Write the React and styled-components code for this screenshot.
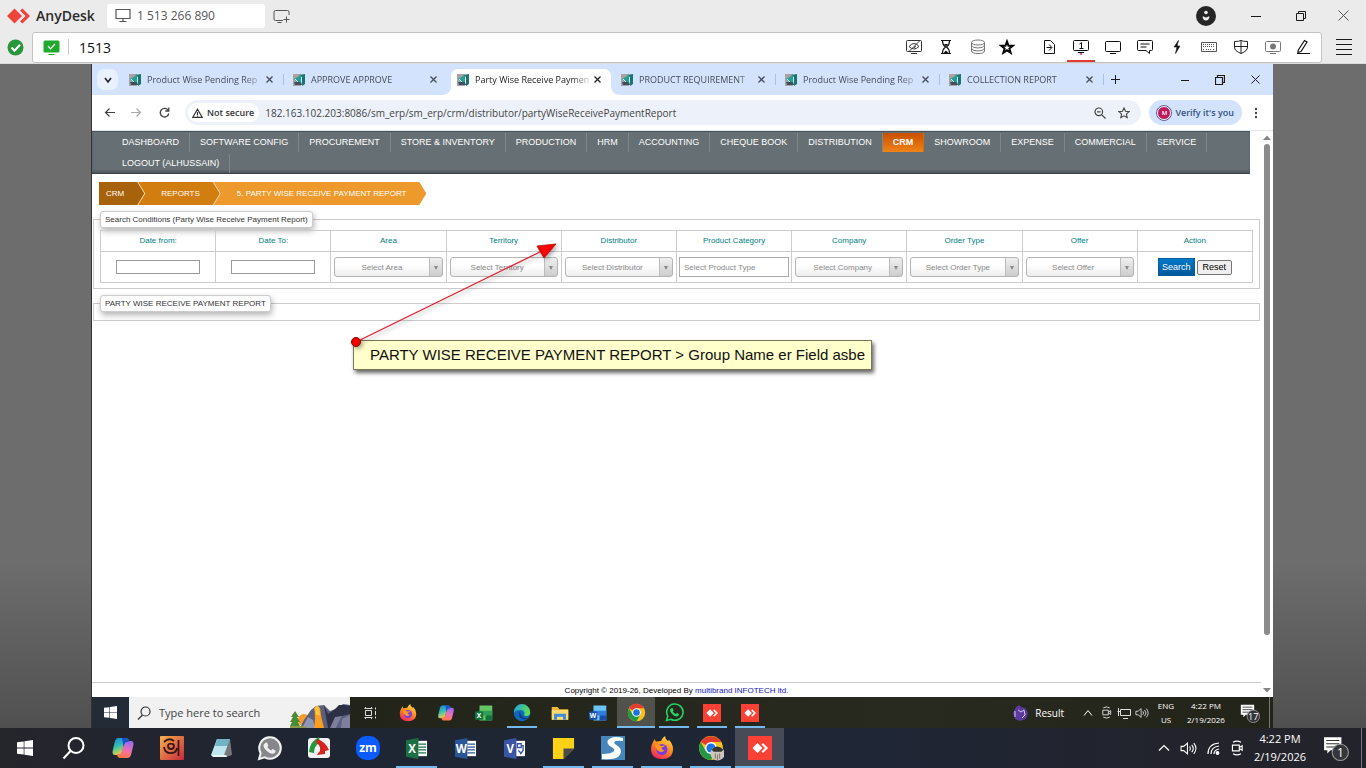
import React from 'react';
import styled, { createGlobalStyle, css } from 'styled-components';

const ui = '"Open Sans", "Noto Sans", sans-serif';
const arial = '"Liberation Sans", Arial, sans-serif';

const GlobalStyle = createGlobalStyle`
  *, *::before, *::after { box-sizing: border-box; }
  body { margin: 0; font-family: ${ui}; font-size: 12px; color: #222; }
  button, input, select { font: inherit; color: inherit; margin: 0; }
  button { padding: 0; border: 0; background: none; }
  ul, ol { list-style: none; margin: 0; padding: 0; }
  a { color: inherit; text-decoration: none; }
  svg { display: block; flex: none; }
`;

const Screen = styled.div`
  display: flex;
  flex-direction: column;
  min-height: 100vh;
  background: #ebebeb;
`;

/* ---------- remote-control client ---------- */
const TitleBar = styled.header`
  display: flex;
  align-items: center;
  height: 31px;
  padding-left: 6px;
`;
const Brand = styled.strong`
  margin-left: 5px;
  flex: 0 0 71px;
  font-size: 14px;
  font-weight: 600;
  color: #2b2b2b;
`;
const SessionTab = styled.button`
  display: flex;
  align-items: center;
  gap: 6px;
  width: 158px;
  height: 24px;
  padding-left: 8px;
  border-radius: 3px;
  background: #fff;
  font-size: 12px;
  color: #555;
`;
const IconButton = styled.button`
  display: flex;
  align-items: center;
  justify-content: center;
  width: ${(p) => p.$w || 32}px;
  height: ${(p) => p.$h || 30}px;
  color: ${(p) => p.$color || '#1a1a1a'};
  ${(p) => p.$active && css`
    background: linear-gradient(#e53935, #e53935) center bottom / 28px 2px no-repeat;
  `}
`;
const Spacer = styled.div`
  flex: 1;
`;
const AddressRow = styled.div`
  display: flex;
  align-items: center;
  height: 33px;
  padding-left: 7px;
  border-bottom: 1px solid #dcdcdc;
`;
const AddressBox = styled.div`
  display: flex;
  flex: 1;
  align-items: center;
  height: 31px;
  margin-left: 8px;
  padding: 0 4px 0 10px;
  border: 1px solid #c4c4c4;
  border-radius: 3px;
  background: #fff;
`;
const AddressInput = styled.input`
  flex: 1;
  min-width: 0;
  margin-left: 8px;
  padding: 0 0 0 10px;
  border: 0;
  border-left: 1px solid #ccc;
  height: 16px;
  font-size: 14px;
  color: #111;
  outline: 0;
`;
const ToolGroup = styled.div`
  display: flex;
  margin-left: ${(p) => p.$gap || 0}px;
`;

/* ---------- remote desktop ---------- */
const Desk = styled.main`
  display: flex;
  flex: 1;
  padding: 0 93px 0 91px;
  background: linear-gradient(#6d6d6d 0%, #6d6d6d 75%, #505050 100%);
`;
const Remote = styled.section`
  display: flex;
  flex: 1;
  flex-direction: column;
  min-width: 0;
  border-left: 1px solid #333;
  background: #fff;
`;

/* ---------- browser ---------- */
const TabStrip = styled.div`
  display: flex;
  align-items: center;
  height: 31px;
  padding-left: 5px;
  background: #d3e3fd;
`;
const TabSearch = styled.button`
  display: flex;
  align-items: center;
  justify-content: center;
  width: 21px;
  height: 21px;
  margin-right: 2px;
  border-radius: 7px;
  background: #e9f0fe;
`;
const Tab = styled.div`
  position: relative;
  display: flex;
  flex: 0 1 164px;
  align-items: center;
  align-self: stretch;
  min-width: 0;
  padding: 0 7px 0 9px;
  color: #444c58;
  ${(p) => p.$divided && css`
    &::after {
      content: '';
      position: absolute;
      right: 0;
      top: 10px;
      width: 1px;
      height: 11px;
      background: #a9bfe4;
    }
  `}
  ${(p) => p.$active && css`
    color: #222;
    &::before {
      content: '';
      position: absolute;
      inset: 5px 1px 0 3px;
      border-radius: 7px 7px 0 0;
      background: #fff;
    }
    &::after {
      content: '';
      position: absolute;
      right: -6px;
      bottom: 0;
      left: -4px;
      height: 7px;
      background:
        radial-gradient(circle at 0 0, transparent 6px, #fff 7px) left / 7px 7px no-repeat,
        radial-gradient(circle at 100% 0, transparent 6px, #fff 7px) right / 7px 7px no-repeat;
    }
  `}
`;
const TabTitle = styled.span`
  position: relative;
  flex: 1;
  margin-left: 6px;
  white-space: nowrap;
  font-size: 9px;
  line-height: 16px;
  mask-image: linear-gradient(90deg, #000 85%, rgba(0, 0, 0, 0.2));
`;
const TabClose = styled.button`
  position: relative;
  display: flex;
  align-items: center;
  justify-content: center;
  width: 16px;
  height: 16px;
`;
const TabIcon = styled.span`
  position: relative;
`;
const Toolbar = styled.div`
  display: flex;
  align-items: center;
  height: 36px;
  padding: 0 3px 0 3px;
  background: #fff;
  border-bottom: 1px solid #dfe3ea;
`;
const Omnibox = styled.div`
  display: flex;
  flex: 1;
  align-items: center;
  min-width: 0;
  height: 25px;
  margin: 0 8px 0 7px;
  padding: 0 5px 0 3px;
  border-radius: 13px;
  background: #edf2fa;
`;
const SecurityChip = styled.button`
  display: flex;
  align-items: center;
  gap: 4px;
  height: 19px;
  padding: 0 5px 0 4px;
  border-radius: 10px;
  background: #fff;
  font-size: 9px;
  font-weight: 600;
  color: #333;
  white-space: nowrap;
`;
const UrlInput = styled.input`
  flex: 1;
  min-width: 0;
  padding: 0 0 0 6px;
  border: 0;
  background: none;
  font-size: 10px;
  color: #444;
  outline: 0;
`;
const ProfileChip = styled.button`
  display: flex;
  align-items: center;
  gap: 4px;
  height: 25px;
  padding: 0 8px 0 8px;
  border-radius: 13px;
  background: #d3e3fd;
  font-size: 9px;
  font-weight: 600;
  color: #35507e;
  white-space: nowrap;
`;
const Avatar = styled.span`
  display: flex;
  align-items: center;
  justify-content: center;
  width: 14px;
  height: 14px;
  border: 1px solid #fff;
  outline: 1px solid #6a5aa5;
  border-radius: 50%;
  background: #c2185b;
  color: #fff;
  font-size: 6px;
`;

/* ---------- ERP page ---------- */
const Viewport = styled.div`
  position: relative;
  display: flex;
  flex: 1;
`;
const Page = styled.div`
  display: flex;
  flex: 1;
  flex-direction: column;
  min-width: 0;
  font-family: ${arial};
  font-size: 8px;
  color: #333;
`;
const ScrollTrack = styled.div`
  display: flex;
  flex-direction: column;
  align-items: center;
  justify-content: space-between;
  width: 12px;
  padding: 3px 0;
`;
const ScrollThumb = styled.div`
  width: 6px;
  flex: 0 0 491px;
  margin: 2px 0 auto;
  border-radius: 3px;
  background: #8b8b8b;
`;
const Nav = styled.nav`
  margin-right: 11px;
  padding: 1px 40px 0 20px;
  height: 43px;
  border-top: 1px solid #4a5356;
  border-bottom: 1px solid #3d4447;
  background: #666f74;
  box-shadow: inset 0 -2px 2px #50585c;
`;
const NavList = styled.ul`
  display: flex;
  flex-wrap: wrap;
`;
const NavLink = styled.a`
  display: block;
  height: 19px;
  margin-bottom: 2px;
  padding: 0 10px;
  border-right: 1px solid ${(p) => (p.$active ? '#d96a05' : '#7d878c')};
  font-size: 9px;
  line-height: 19px;
  color: #fff;
  ${(p) => p.$active && css`
    font-weight: 700;
    background: linear-gradient(#c84f00, #f08418);
  `}
`;
const Crumbs = styled.ol`
  display: flex;
  margin: 8px 0 0 7px;
  isolation: isolate;
`;
const arrow = 'polygon(0 0, calc(100% - 7px) 0, 100% 50%, calc(100% - 7px) 100%, 0 100%)';
const Crumb = styled.li`
  z-index: ${(p) => p.$level};
  margin-right: -7px;
  padding-right: ${(p) => (p.$last ? 0 : 1)}px;
  clip-path: ${arrow};
  background: #fbdcae;
`;
const CrumbLink = styled.a`
  display: block;
  height: 23px;
  padding: 0 20px 0 ${(p) => p.$left}px;
  clip-path: ${arrow};
  background: ${(p) => p.$color};
  font-size: 8px;
  line-height: 23px;
  color: #fff;
`;
const Panel = styled.fieldset`
  min-width: 0;
  margin: ${(p) => p.$top}px 1px 0;
  padding: ${(p) => (p.$empty ? '8px 0 0' : '2px 6px 5px')};
  border: 1px solid #ccc;
`;
const Legend = styled.legend`
  margin-left: ${(p) => (p.$flush ? 6 : 0)}px;
  padding: 0 4px;
  height: 17px;
  border: 1px solid #ccc;
  border-radius: 3px;
  background: #fff;
  box-shadow: 1px 3px 6px rgba(0, 0, 0, 0.3);
  font-size: 8px;
  line-height: 15px;
  color: #333;
`;
const FilterTable = styled.table`
  width: 100%;
  table-layout: fixed;
  border-collapse: collapse;
  text-align: center;
`;
const HeadCell = styled.th`
  height: 21px;
  padding: 0 0 1px;
  border: 1px solid #ccc;
  font-size: 8px;
  font-weight: 400;
  color: #008080;
`;
const Cell = styled.td`
  height: 31px;
  padding: 0 2px;
  border: 1px solid #ccc;
`;
const DateInput = styled.input`
  display: block;
  width: 84px;
  height: 14px;
  margin: 0 auto;
  border: 1px solid #999;
  background: #fff;
`;
const CategoryInput = styled.input`
  display: block;
  width: 100%;
  height: 20px;
  padding: 0 4px;
  border: 1px solid #aaa;
  font-size: 8px;
  &::placeholder { color: #888; opacity: 1; }
`;
const SelectShell = styled.span`
  position: relative;
  display: block;
  margin: 0 1px;
  &::after {
    content: '';
    position: absolute;
    right: 5px;
    top: 9px;
    border: 2px solid transparent;
    border-top: 4px solid #888;
    border-bottom: 0;
    pointer-events: none;
  }
`;
const Select = styled.select`
  display: block;
  width: 100%;
  height: 20px;
  padding: 0 13px 0 0;
  appearance: none;
  border: 1px solid #b4b4b4;
  border-radius: 3px;
  background:
    linear-gradient(#bbb, #bbb) right 12px top / 1px 100% no-repeat,
    linear-gradient(#f0f0f0, #ccc) right top / 12px 100% no-repeat,
    linear-gradient(#fff 40%, #ececec);
  font-size: 8px;
  text-align: center;
  text-align-last: center;
  color: #888;
`;
const Actions = styled.div`
  display: flex;
  align-items: center;
  justify-content: center;
  gap: 2px;
`;
const SearchButton = styled.button`
  width: 37px;
  height: 18px;
  border: 1px solid #0a5c9e;
  background: linear-gradient(#0078c8, #005a9c);
  font-size: 9px;
  color: #fff;
`;
const ResetButton = styled.button`
  width: 35px;
  height: 15px;
  border: 1px solid #767676;
  border-radius: 2px;
  background: #efefef;
  font-size: 9px;
  line-height: 12px;
  color: #000;
`;
const Footer = styled.footer`
  margin-top: auto;
  height: 15px;
  border-top: 1px solid #ccc;
  font-size: 8px;
  line-height: 15px;
  text-align: center;
  color: #000;
  a { color: #1414c8; }
`;
const Note = styled.div`
  position: absolute;
  left: 261px;
  top: 209px;
  padding: 0 16px;
  width: 519px;
  height: 30px;
  border: 1px solid #77775a;
  background: #ffffcc;
  box-shadow: 2px 3px 4px rgba(0, 0, 0, 0.6);
  font-family: ${arial};
  font-size: 15px;
  line-height: 28px;
  white-space: nowrap;
  color: #111;
`;
const Pointer = styled.svg`
  position: absolute;
  left: 256px;
  top: 107px;
  pointer-events: none;
  filter: drop-shadow(2px 2px 2px rgba(0, 0, 0, 0.35));
`;

/* ---------- task bars ---------- */
const Taskbar = styled.footer`
  display: flex;
  align-items: stretch;
  height: ${(p) => (p.$inner ? 31 : 40)}px;
  background: ${(p) => (p.$inner
    ? 'linear-gradient(90deg, #1f2118, #292a1f 70%, #232419)'
    : 'linear-gradient(90deg, #25252c, #1e2533 25%, #1f2635 65%, #23232b 90%)')};
  color: #fff;
`;
const Task = styled.button`
  display: flex;
  align-items: center;
  justify-content: center;
  position: relative;
  width: ${(p) => p.$w}px;
  background: ${(p) => p.$bg || 'none'};
  ${(p) => p.$running && css`
    &::after {
      content: '';
      position: absolute;
      left: ${p.$current ? 0 : 4}px;
      right: ${p.$current ? 0 : 4}px;
      bottom: 0;
      height: 2px;
      background: #76b9ed;
    }
  `}
`;
const SearchBox = styled.label`
  display: flex;
  align-items: center;
  width: 221px;
  margin-right: 1px;
  padding-left: 8px;
  background: #f1f1f1;
  color: #333;
`;
const TaskSearch = styled.input`
  flex: 1;
  min-width: 0;
  padding: 0 0 0 8px;
  border: 0;
  background: none;
  font-size: 11px;
  outline: 0;
  &::placeholder { color: #444; opacity: 1; }
`;
const Tray = styled.div`
  display: flex;
  align-items: center;
  margin-left: auto;
`;
const TrayText = styled.span`
  display: block;
  width: ${(p) => p.$w}px;
  text-align: center;
  font-size: ${(p) => (p.$large ? 11 : 8)}px;
  line-height: ${(p) => (p.$large ? 18 : 14)}px;
  white-space: nowrap;
`;
const NewsButton = styled.button`
  display: flex;
  align-items: center;
  gap: 7px;
  margin-right: 15px;
  font-size: 10px;
`;
const ShowDesktop = styled.button`
  align-self: stretch;
  width: ${(p) => p.$w}px;
  border-left: 1px solid #777;
`;

/* ---------- drawings ---------- */
const Line = ({ w = 16, h = 16, sw = 1, children, ...rest }) => (
  <svg width={w} height={h} viewBox={`0 0 ${w} ${h}`} fill="none" stroke="currentColor" strokeWidth={sw} aria-hidden="true" {...rest}>{children}</svg>
);
const Art = ({ s = 24, box = 24, children }) => (
  <svg width={s} height={s} viewBox={`0 0 ${box} ${box}`} aria-hidden="true">{children}</svg>
);

const AnyDeskMark = () => (
  <svg width="25" height="18" viewBox="0 0 25 18" aria-hidden="true">
    <path d="M8.500 1.500 16 9l-7.500 7.500L1 9z" fill="#ef443b" />
    <path d="M14 3.500 16.500 1.500 24 9l-7.500 7.500L14 14.500 19.500 9z" fill="#ef443b" />
  </svg>
);
const Monitor = () => (
  <Line w={16} h={15} sw={1.2}><path d="M1 1.500h14v9H1zM8 10.500v3M4.500 13.500h7" /></Line>
);
const MonitorPlus = () => (
  <Line w={17} h={14}><path d="M10 11.500H2.500q-1.500 0-1.500-1.500V3q0-1.500 1.500-1.500h12Q16 1.500 16 3v3M4.500 13.500h4M13.500 7.500v6M10.500 10.500h6" /></Line>
);
const Cross = ({ s = 9, sw = 1 }) => (
  <Line w={s} h={s} sw={sw}><path d={`M.5.5 ${s - 0.5} ${s - 0.5}M${s - 0.5}.5.5 ${s - 0.5}`} /></Line>
);
const Dash = ({ s = 10, sw = 1 }) => <Line w={s} h={10} sw={sw}><path d={`M0 5.500h${s}`} /></Line>;
const Restore = ({ sw = 1 }) => (
  <Line w={10} h={10} sw={sw}><path d="M.5 2.500h7v7h-7zM2.500 2.500v-2h7v7h-2" /></Line>
);
const Chevron = ({ up, w = 12, sw = 1.2 }) => (
  <Line w={w} h={8} sw={sw}><path d={up ? `M1 6.500 ${w / 2} 1.500 ${w - 1} 6.500` : `M1 2 ${w / 2} 6 ${w - 1} 2`} /></Line>
);

const tools = [
  [
    ['Privacy mode', 32, '#333', <path d="M1.500 1.500h13q1 0 1 1v9q0 1-1 1h-13q-1 0-1-1v-9q0-1 1-1zM5 14.500h6M3 7.500q5-6 10 0-5 5-10 0M2.500 13 13.500 2M9.500 7q0 1.500-1.500 1.500" />],
    ['Session time', 32, '#111', <g><path d="M3 1.500h10M3 14.500h10M4.500 2q0 4 3 6-3 2-3 6M11.500 2q0 4-3 6 3 2 3 6" strokeWidth="1.200" /><path d="M6 5h4L8 7.500zM5.500 14 8 11.500l2.500 2.500z" fill="currentColor" stroke="none" /></g>],
    ['Recordings', 32, '#777', <g><ellipse cx="8" cy="3.500" rx="6.500" ry="2.500" /><path d="M1.500 3.500V12Q2 14.500 8 14.500T14.500 12V3.500M1.500 6.500Q3 9 8 9t6.500-2.500M1.500 9.500Q3 12 8 12t6.500-2.500" /></g>],
    ['Favorite', 26, '#000', <path d="M8 2.500 9.500 6.700l4.300.1-3.400 2.700 1.200 4.200L8 11.300l-3.600 2.400 1.200-4.200-3.400-2.700 4.300-.1z" strokeWidth="2" />],
  ],
  [
    ['File transfer', 32, '#111', <path d="M3.500 1.500h6l4 4v9h-10zM5.500 8.500h5M8 5.500l3 3-3 3" />],
    ['Monitor 1', 32, '#111', <g><path d="M.5 2.500q0-1 1-1h13q1 0 1 1v8q0 1-1 1h-13q-1 0-1-1zM5 13.500h6M6.500 5l2-1.500v6M6.500 9.500h4" /><circle cx="8" cy="15" r="1" fill="#e53935" stroke="none" /></g>, true],
    ['Display', 32, '#111', <path d="M.5 3.500q0-1 1-1h13q1 0 1 1v8q0 1-1 1h-13q-1 0-1-1zM5 14.500h6" />],
    ['Chat', 32, '#111', <path d="M.5 2.500q0-1 1-1h13q1 0 1 1v8q0 1-1 1h-2v3l-3.500-3h-7.500q-1 0-1-1zM3.500 5h9M3.500 8h6" />],
    ['Actions', 32, '#111', <path d="M9.500 1.500 5 8h3L6.500 14.500 11 7H8z" fill="currentColor" strokeWidth=".6" />],
    ['Keyboard', 32, '#555', <g><path d="M.5 3.500h15v9H.5z" /><path d="M2 5.500h12M2 7.500h12M2 10.500h2M5 10.500h6M12 10.500h2" strokeDasharray="1 1" /></g>],
    ['Permissions', 32, '#222', <path d="M1.500 2.500Q6 2.500 8 1.500q2 1 6.500 1V8q0 4-6.500 6.500Q1.500 12 1.500 8zM8 1.500v13M1.500 7.500h13" />],
    ['Record session', 32, '#777', <g><path d="M.5 3.500q0-1 1-1h13q1 0 1 1v8q0 1-1 1h-13q-1 0-1-1zM5 14.500h6" /><circle cx="8" cy="7.500" r="3" fill="currentColor" stroke="none" /></g>],
    ['Whiteboard', 28, '#111', <path d="M3 11.500 9.500 1.500l2.500 1.500-6 9.500-3 1zM2 14.500h13" strokeWidth="1.200" />],
  ],
];

const Favicon = () => (
  <Art s={12} box={12}>
    <path d="M0 0h8v12H0z" fill="#a9a2a3" />
    <path d="M6 1 12 0v10l-3 2V3z" fill="#17766f" />
    <path d="M1 5 8 1v8L5 9z" fill="#24a094" />
    <path d="M1 8h7l1 3H2z" fill="#3f515e" />
    <path d="M2 5l3 3" stroke="#e4eceb" />
  </Art>
);
const WindowsMark = ({ s }) => (
  <Art s={s} box={16}><path d="M0 2.300 6.700 1.400V7.600H0zM7.400 1.300 16 0V7.600H7.400zM0 8.400h6.700v6.200L0 13.700zM7.400 8.400H16V16l-8.600-1.300z" fill="#fff" /></Art>
);
const Copilot = ({ s }) => (
  <Art s={s}>
    <defs>
      <linearGradient id="cpA" x1="0" y1="0" x2=".4" y2="1"><stop stopColor="#1b7fe8" /><stop offset=".5" stopColor="#2fc0b0" /><stop offset="1" stopColor="#f4d53a" /></linearGradient>
      <linearGradient id="cpB" x1=".6" y1="0" x2=".3" y2="1"><stop stopColor="#9b6cf0" /><stop offset=".5" stopColor="#ee6fb1" /><stop offset="1" stopColor="#ff7a3c" /></linearGradient>
    </defs>
    <path d="M7 2h8q2 0 2.700 2L18 6h-2q-2 0-3 3l-2 7q-1 3-3 3H4q-3 0-2.400-4L4 5q1-3 3-3z" fill="url(#cpA)" />
    <path d="M17 22H9q-2 0-2.700-2L6 18h2q2 0 3-3l2-7q1-3 3-3h4q3 0 2.400 4L20 19q-1 3-3 3z" fill="url(#cpB)" />
    <path d="M11 2h4q2 0 2.700 2L18 6h-2q-2 0-3 3l-.6 2z" fill="#1c55c9" />
  </Art>
);
const Firefox = ({ s }) => (
  <Art s={s}>
    <defs><linearGradient id="ff" x1=".8" y1="0" x2=".3" y2="1"><stop stopColor="#ffe14a" /><stop offset=".5" stopColor="#ff8a1e" /><stop offset="1" stopColor="#f0245f" /></linearGradient></defs>
    <path d="M3 6q1-2 2-3 0 2 1 2.500Q9 5 11 5q1-3 4-5 0 3 3 5l1-1q4 4 4 9 0 10-11 10T1 13q0-4 2-7z" fill="url(#ff)" />
    <circle cx="12" cy="13.500" r="5.500" fill="#7a3de0" />
    <path d="M5 9q4-1 6 1l4-.5q-1 2-3.500 2 0 3 3 2.500-2 3-5 1.500Q6 14 5 9z" fill="#ff9a1f" />
  </Art>
);
const Chrome = ({ s, badge }) => (
  <Art s={s}>
    <circle cx="12" cy="12" r="11" fill="#fbc116" />
    <path d="M12 12 2.500 6.500A11 11 0 0 1 21.500 6.500H12z" fill="#e33b2e" />
    <path d="M2.500 6.500A11 11 0 0 0 12 23l4.800-8.200L12 12 7.200 14.800z" fill="#229a45" />
    <circle cx="12" cy="12" r="5.500" fill="#fff" />
    <circle cx="12" cy="12" r="4.200" fill="#1a73e8" />
    {badge && <g><circle cx="18" cy="17" r="6.500" fill="#cfc6be" /><path d="M12.500 13.500q5-6 11 0l-2 2h-7z" fill="#38332f" /><path d="M16 17v5M18 18v5M20 17v5" stroke="#75685f" strokeWidth=".8" /></g>}
  </Art>
);
const WhatsApp = ({ s, color, fill = 'none' }) => (
  <Art s={s}>
    <path d="M2 22l1.500-5.500A10.300 10.300 0 1 1 7.500 20.500z" fill={fill} stroke={color} strokeWidth="2" />
    <path d="M8 6.500l1.600-.2 1.300 3-1 1.300q1.400 2.400 3.700 3.400l1.300-1.500 2.900 1.500q0 2.600-2.600 3-3 .3-6-2.800-3.500-3.800-2.900-5.900z" fill={color} />
  </Art>
);
const AnyDeskTile = ({ s }) => (
  <Art s={s}>
    <path d="M0 0h24v24H0z" fill="#fb4135" />
    <path d="M9.500 7 14.500 12l-5 5-5-5zM13.500 8.500 15 7l5 5-5 5-1.500-1.500L17 12z" fill="#fff" />
  </Art>
);
const Label = ({ x, y, size, children, fill = '#fff' }) => (
  <text x={x} y={y} fontSize={size} fontWeight="700" fontFamily={ui} fill={fill} textAnchor="middle">{children}</text>
);
const OfficeTile = ({ s, letter, dark, light }) => (
  <Art s={s}>
    <path d="M12 4h11v16H12z" fill="#fff" />
    {letter === 'V'
      ? <path d="M15 7h4v4h-4zM16 14l3 3M19 9h2v5l-3 4" fill="none" stroke={light} strokeWidth="1.400" />
      : <path d="M14 7.500h8M14 10.500h8M14 13.500h8M14 16.500h8" stroke={light} strokeWidth="1.200" />}
    <path d="M1 3.500 14 1v22L1 20.500z" fill={dark} />
    <Label x="7.500" y="16.500" size="12">{letter}</Label>
  </Art>
);
const Office365 = ({ s, letter, colors }) => (
  <Art s={s}>
    <path d="M6 2h16q1 0 1 1v18q0 1-1 1H6z" fill={colors[0]} />
    <path d="M6 9h17v6H6z" fill={colors[1]} />
    <path d="M14 15h9v7h-9z" fill={colors[2]} />
    <rect x="0" y="10" width="11" height="11" rx="1.500" fill={colors[2]} />
    <Label x="5.500" y="19" size="9">{letter}</Label>
  </Art>
);
const Edge = ({ s }) => (
  <Art s={s}>
    <defs><linearGradient id="eg" x1="0" y1="0" x2="1" y2=".4"><stop stopColor="#1c9fe6" /><stop offset="1" stopColor="#5ddc5a" /></linearGradient></defs>
    <circle cx="12" cy="12" r="11" fill="#1168bd" />
    <path d="M1 11A11 11 0 0 1 23 11q0 5-5 5-3 0-3.500-1.500Q16 13 15 11q-1-3-5-3-6 0-9 3z" fill="url(#eg)" />
    <path d="M9 10q-3 7 3 10 5 2 9-2-6 2-9-2-2-3-3-6z" fill="#0b3f86" />
  </Art>
);
const Explorer = ({ s }) => (
  <Art s={s}>
    <path d="M1 4h8l2 3h12v14H1z" fill="#f0b73c" /><path d="M1 8h22v13H1z" fill="#ffd96b" />
    <path d="M4 13h16v8h-4v-4H8v4H4z" fill="#3b8edb" />
  </Art>
);
const CameraIcon = ({ s = 14 }) => (
  <svg width={s} height={s} viewBox="0 0 14 14" fill="none" stroke="currentColor" aria-hidden="true"><path d="M3 4.500h6v5H3zM9 6.500l2.500-1.500v4L9 7.500M3.500 2q3.500-2 7 0M3.500 12q3.500 2 7 0" /></svg>
);
const Speaker = ({ s = 16 }) => (
  <svg width={s} height={s} viewBox="0 0 16 16" fill="none" stroke="currentColor" aria-hidden="true"><path d="M1 6h2.500L7 3v10l-3.500-3H1zM9 6q1.500 2 0 4M11 4.500q3 3.500 0 7M13 3q4 5 0 10" /></svg>
);
const Wifi = () => (
  <Line w={16} h={16} sw={1.2}><path d="M3 14Q3 4 14 3M6 14q0-7 8-8M9 14q0-4 5-5" /><circle cx="12.500" cy="13" r="1.300" fill="currentColor" /></Line>
);
const Notify = ({ s, count }) => (
  <svg width={s} height={s} viewBox="0 0 24 24" aria-hidden="true">
    <path d="M1 2h16v12H7l-3 3v-3H1z" fill="#fff" /><path d="M3 5h12M3 8h12M3 11h9" stroke="#333" />
    <circle cx="16" cy="16" r="7.500" fill="#34363a" stroke="#999" />
    <text x="16" y="20" fontSize="11" fontFamily={ui} fill="#fff" textAnchor="middle">{count}</text>
  </svg>
);

/* ---------- data ---------- */
const tabs = [
  ['Product Wise Pending Rep', true],
  ['APPROVE APPROVE', false],
  ['Party Wise Receive Paymen', false],
  ['PRODUCT REQUIREMENT', true],
  ['Product Wise Pending Rep', true],
  ['COLLECTION REPORT', true],
];
const menu = ['DASHBOARD', 'SOFTWARE CONFIG', 'PROCUREMENT', 'STORE & INVENTORY', 'PRODUCTION', 'HRM', 'ACCOUNTING', 'CHEQUE BOOK', 'DISTRIBUTION', 'CRM', 'SHOWROOM', 'EXPENSE', 'COMMERCIAL', 'SERVICE', 'LOGOUT (ALHUSSAIN)'];
const filters = [
  ['Date from:', 'date'], ['Date To:', 'date'], ['Area', 'select', 'Select Area'], ['Territory', 'select', 'Select Territory'],
  ['Distributor', 'select', 'Select Distributor'], ['Product Category', 'text', 'Select Product Type'], ['Company', 'select', 'Select Company'],
  ['Order Type', 'select', 'Select Order Type'], ['Offer', 'select', 'Select Offer'],
];
const innerApps = [
  ['Task View', <Line w={14} h={14} color="#ddd"><path d="M2.500 4.500h6v5h-6zM1.500 2.500h8M1.500 11.500h8M2.500 1v2M8.500 1v2M2.500 11v2M8.500 11v2M12.500 1.500v2M12.500 5v4M12.500 10.500v2" /></Line>],
  ['Firefox', <Firefox s={18} />],
  ['Copilot', <Copilot s={18} />],
  ['Excel', <Office365 s={18} letter="X" colors={['#64c466', '#2f9e57', '#12743c']} />],
  ['Edge', <Edge s={18} />, true],
  ['File Explorer', <Explorer s={18} />],
  ['Word', <Office365 s={18} letter="W" colors={['#6cc5f7', '#2f7de0', '#1a4fb0']} />],
  ['Chrome', <Chrome s={19} />, true, true],
  ['WhatsApp', <WhatsApp s={19} color="#25d366" />, true],
  ['AnyDesk', <AnyDeskTile s={18} />, true],
  ['AnyDesk session', <AnyDeskTile s={18} />, true],
];
const outerApps = [
  ['Start', <WindowsMark s={16} />],
  ['Search', <Line w={24} h={24} sw={2}><circle cx="14" cy="9.500" r="7.500" /><path d="M8.500 15 1.500 22.500" /></Line>],
  ['Copilot', <Copilot s={24} />],
  ['Bangla keyboard', <Art><defs><linearGradient id="bn" x1="0" y1="0" x2="1" y2="1"><stop stopColor="#f8b24c" /><stop offset="1" stopColor="#c8283a" /></linearGradient></defs><rect width="24" height="24" rx="1" fill="url(#bn)" /><path d="M4 6q5-5 10-1M18.500 4v16M12 8q-4-1-4 2t3 3q3 0 3-3 0-2-2-2M4 11q1 7 8 6 4 0 5-5" fill="none" stroke="#3b1717" strokeWidth="1.800" /></Art>],
  ['Notepad', <Art><path d="M8 3h13l-4 16H2z" fill="#bfe6ee" /><path d="M8 3h13l-2 7H6z" fill="#6fb3c4" /><path d="M21 3l2 16-6 2-2-2z" fill="#77777c" /><path d="M2 19h15l1 2H4z" fill="#e9f6f8" /></Art>],
  ['WhatsApp', <WhatsApp s={25} color="#f0f0f0" fill="#85878a" />],
  ['Download manager', <Art><rect x="1" y="2" width="22" height="20" rx="3" fill="#f3f3f3" /><path d="M12 1Q3 5 2 16l5 1q0-7 6-11z" fill="#1f9a3c" /><path d="M10 3q9 3 12 11l-4 1 0 3-8 1q1-2 3-4Q14 9 9 7z" fill="#d72222" /></Art>],
  ['Zoom', <Art><rect width="24" height="24" rx="10" fill="#0b5cff" /><Label x="12" y="16" size="12">zm</Label></Art>],
  ['Excel', <OfficeTile s={23} letter="X" dark="#1d7044" light="#1d7044" />, true],
  ['Word', <OfficeTile s={23} letter="W" dark="#2a5699" light="#2a5699" />],
  ['Visio', <OfficeTile s={23} letter="V" dark="#3955a3" light="#3955a3" />],
  ['Sticky Notes', <Art s={23}><path d="M1 1h22v11L12 23H1z" fill="#fcd116" /><path d="M12 12h11L12 23z" fill="#4a4a4a" /></Art>, true],
  ['Support', <Art><path d="M0 0h24v24H0z" fill="#4686bb" /><path d="M22 2q-8-2-12 0-5 2-3 6 1 2 5 4 2 1 1 3-2 3-12 3v5q13 1 17-3 4-5 0-9l-4-3q-2-2 1-3 3-.5 7 0z" fill="#fff" /></Art>, true],
  ['Firefox', <Firefox s={24} />, true],
  ['Chrome', <Chrome s={26} badge />, true],
  ['AnyDesk', <AnyDeskTile s={24} />, true, true],
];

const SearchScene = () => (
  <svg width="60" height="31" viewBox="0 0 60 31" aria-hidden="true">
    <circle cx="14" cy="23" r="6" fill="#f79a2a" />
    <path d="M10 31 14 23l7-10 5-4 8-1 6 6 8-3 5-4 7 1v23z" fill="#5a6079" />
    <path d="M34 8l4 9 6-4 5-5 6 0 5 1v8l-8 2-6 12H38z" fill="#2d3044" />
    <path d="M12 31l6-11 5 3 2 8z" fill="#8e98b4" />
    <path d="M40 31l5-11 7-1-6 12zM52 22l8-4v13h-9z" fill="#7d7f9c" />
    <path d="M24 11q3-3 6 0 1 10 4 20H24q2-12 0-20z" fill="#fb9c23" />
    <path d="M25 10q2-2 4 0l1 8h-4z" fill="#ffc53a" />
    <path d="M5 14 1 20h2l-3 5h2l-2 4h4v2h2v-2h4l-2-4h2l-3-5h2z" fill="#4b8a35" />
    <path d="M0 29h14l4 2H0z" fill="#8a9a48" />
  </svg>
);

function FilterControl({ kind, label, text }) {
  if (kind === 'date') return <DateInput type="text" aria-label={label} />;
  if (kind === 'text') return <CategoryInput type="text" aria-label={label} placeholder={text} />;
  return (
    <SelectShell>
      <Select aria-label={label} defaultValue=""><option value="">{text}</option></Select>
    </SelectShell>
  );
}

export default function App() {
  return (
    <Screen>
      <GlobalStyle />
      <TitleBar>
        <AnyDeskMark />
        <Brand>AnyDesk</Brand>
        <SessionTab><Monitor />1 513 266 890</SessionTab>
        <IconButton aria-label="New session" $color="#555"><MonitorPlus /></IconButton>
        <Spacer />
        <IconButton aria-label="Account" $w={50}>
          <Art s={20} box={20}><circle cx="10" cy="10" r="10" fill="#262626" /><circle cx="10" cy="6.500" r="1.800" fill="#eee" /><path d="M6.500 10.500h1.300q2.200 2 4.400 0h1.300q-.5 4-3.500 4t-3.500-4z" fill="#eee" /></Art>
        </IconButton>
        <IconButton aria-label="Minimize" $w={50}><Dash /></IconButton>
        <IconButton aria-label="Restore" $w={40}><Restore /></IconButton>
        <IconButton aria-label="Close" $w={45} $color="#555"><Cross s={11} /></IconButton>
      </TitleBar>
      <AddressRow>
        <Art s={17} box={17}><circle cx="8.500" cy="8.500" r="8" fill="#28963a" /><path d="M4.500 8.500l3 3.200 5.500-6" fill="none" stroke="#fff" strokeWidth="2" /></Art>
        <AddressBox>
          <svg width="17" height="15" viewBox="0 0 17 15" aria-hidden="true"><rect x=".5" y=".5" width="16" height="12" rx="1.500" fill="#1faa2e" /><path d="M5.500 14.500h6" stroke="#1faa2e" /><path d="M5 6l2.500 2.800L12 4" fill="none" stroke="#fff" strokeWidth="1.200" /></svg>
          <AddressInput aria-label="Remote address" defaultValue="1513" />
          {tools.map((group, i) => (
            <ToolGroup key={i} $gap={i * 13}>
              {group.map(([name, w, color, shape, active]) => (
                <IconButton key={name} aria-label={name} $w={w} $color={color} $active={active}><Line>{shape}</Line></IconButton>
              ))}
            </ToolGroup>
          ))}
        </AddressBox>
        <IconButton aria-label="Menu" $w={44}><Line w={16} h={17}><path d="M0 .5h16M0 5.500h16M0 10.500h16M0 15.500h16" /></Line></IconButton>
      </AddressRow>

      <Desk>
        <Remote>
          <TabStrip>
            <TabSearch aria-label="Search tabs"><Chevron w={8} sw={1.6} /></TabSearch>
            {tabs.map(([title, divided], i) => (
              <Tab key={i} $divided={divided} $active={i === 2}>
                <TabIcon><Favicon /></TabIcon>
                <TabTitle>{title}</TabTitle>
                <TabClose aria-label={`Close ${title}`}><Cross s={7} sw={1.3} /></TabClose>
              </Tab>
            ))}
            <IconButton aria-label="New tab" $w={22}><Line w={9} h={9}><path d="M4.500 0v9M0 4.500h9" /></Line></IconButton>
            <Spacer />
            <IconButton aria-label="Minimize window" $w={35}><Dash s={8} /></IconButton>
            <IconButton aria-label="Restore window" $w={35}><Restore sw={1.2} /></IconButton>
            <IconButton aria-label="Close window" $w={36}><Cross s={9} /></IconButton>
          </TabStrip>
          <Toolbar>
            <IconButton aria-label="Back" $w={28} $color="#444"><Line w={11} h={11} sw={1.2}><path d="M11 5.500H1.500M5.500 1.500l-4 4 4 4" /></Line></IconButton>
            <IconButton aria-label="Forward" $w={27} $color="#aaa"><Line w={11} h={11} sw={1.2}><path d="M0 5.500h9.500M5.500 1.500l4 4-4 4" /></Line></IconButton>
            <IconButton aria-label="Reload" $w={28} $color="#444"><Line w={11} h={11} sw={1.3}><path d="M9.300 3.500A4.300 4.300 0 1 0 9.800 6.500M9.800.5v3.500H6.300" /></Line></IconButton>
            <Omnibox>
              <SecurityChip><Line w={11} h={10} sw={1.2}><path d="M5.500 1.200 10.200 9.300H.8zM5.500 4v3M5.500 7.500v1" /></Line>Not secure</SecurityChip>
              <UrlInput aria-label="Address" defaultValue="182.163.102.203:8086/sm_erp/sm_erp/crm/distributor/partyWiseReceivePaymentReport" />
              <IconButton aria-label="Zoom" $w={24} $h={20} $color="#444"><Line w={12} h={12} sw={1.2}><circle cx="4.800" cy="4.800" r="3.800" /><path d="M7.800 7.800 11.500 11.500M3 4.800h3.600" /></Line></IconButton>
              <IconButton aria-label="Bookmark" $w={24} $h={20} $color="#444"><Line w={12} h={12} sw={1.1}><path d="M6 1l1.500 3.300 3.600.3-2.700 2.500.8 3.600L6 8.800l-3.200 1.900.8-3.600L.9 4.600l3.600-.3z" /></Line></IconButton>
            </Omnibox>
            <ProfileChip><Avatar>M</Avatar>Verify it's you</ProfileChip>
            <IconButton aria-label="Browser menu" $w={28} $color="#444"><Line w={4} h={12} stroke="none" fill="currentColor"><circle cx="2" cy="2" r="1.200" /><circle cx="2" cy="6" r="1.200" /><circle cx="2" cy="10" r="1.200" /></Line></IconButton>
          </Toolbar>

          <Viewport>
            <Page>
              <Nav>
                <NavList>
                  {menu.map((item) => <li key={item}><NavLink href="#" $active={item === 'CRM'}>{item}</NavLink></li>)}
                </NavList>
              </Nav>
              <Crumbs>
                <Crumb $level={3}><CrumbLink href="#" $color="#a8620c" $left={7}>CRM</CrumbLink></Crumb>
                <Crumb $level={2}><CrumbLink href="#" $color="#d27d10" $left={23}>REPORTS</CrumbLink></Crumb>
                <Crumb $level={1} $last><CrumbLink href="#" $color="#ee992c" $left={23}>5. PARTY WISE RECEIVE PAYMENT REPORT</CrumbLink></Crumb>
              </Crumbs>
              <Panel $top={6}>
                <Legend>Search Conditions (Party Wise Receive Payment Report)</Legend>
                <FilterTable>
                  <thead>
                    <tr>
                      {filters.map(([label]) => <HeadCell key={label} scope="col">{label}</HeadCell>)}
                      <HeadCell scope="col">Action</HeadCell>
                    </tr>
                  </thead>
                  <tbody>
                    <tr>
                      {filters.map(([label, kind, text]) => <Cell key={label}><FilterControl kind={kind} label={label} text={text} /></Cell>)}
                      <Cell>
                        <Actions><SearchButton type="button">Search</SearchButton><ResetButton type="reset">Reset</ResetButton></Actions>
                      </Cell>
                    </tr>
                  </tbody>
                </FilterTable>
              </Panel>
              <Panel $top={6} $empty>
                <Legend $flush>PARTY WISE RECEIVE PAYMENT REPORT</Legend>
              </Panel>
              <Footer>Copyright © 2019-26, Developed By <a href="#">multibrand INFOTECH ltd.</a></Footer>
            </Page>
            <ScrollTrack>
              <Art s={8} box={8}><path d="M4 1.500 8 6H0z" fill="#858585" /></Art>
              <ScrollThumb />
              <Art s={8} box={8}><path d="M4 6.500 8 2H0z" fill="#858585" /></Art>
            </ScrollTrack>
            <Note>PARTY WISE RECEIVE PAYMENT REPORT &gt; Group Name er Field asbe</Note>
            <Pointer width="216" height="112" viewBox="0 0 216 112" aria-hidden="true">
              <path d="M8 104 196 12" stroke="#e8182c" strokeWidth="1.200" />
              <path d="M208 6 189 8l7 12z" fill="#f00" stroke="#a00000" strokeWidth=".7" />
              <circle cx="8" cy="104" r="4.500" fill="#f00000" stroke="#8c0000" />
            </Pointer>
          </Viewport>

          <Taskbar $inner>
            <Task aria-label="Start menu" $w={37} $bg="#222b36"><WindowsMark s={13} /></Task>
            <SearchBox>
              <Line w={14} h={14} sw={1.2}><circle cx="8.500" cy="5.500" r="4.500" /><path d="M5.500 9 1 13.500" /></Line>
              <TaskSearch aria-label="Type here to search" placeholder="Type here to search" />
              <SearchScene />
            </SearchBox>
            {innerApps.map(([name, icon, running, current]) => (
              <Task key={name} aria-label={name} $w={38} $running={running} $current={current} $bg={current && '#50524b'}>{icon}</Task>
            ))}
            <Tray>
              <NewsButton>
                <Art s={16} box={16}><path d="M4 2l3-2 2 2 4 1 3 5-2 6-6 2-5-2-2-6z" fill="#5b3a9c" /><path d="M6 5l3 2 3-2 1 5-3 3M3 6v6" fill="none" stroke="#d8c6f5" /></Art>
                Result
              </NewsButton>
              <IconButton aria-label="Hidden icons" $w={18} $color="#fff"><Chevron up w={10} sw={1} /></IconButton>
              <IconButton aria-label="Meet now" $w={18} $color="#ddd"><CameraIcon s={13} /></IconButton>
              <IconButton aria-label="Network" $w={18} $color="#ddd"><Line w={14} h={12}><path d="M3.500 2.500h10v6h-10zM6 11.500h5M1.500 1v3M.5 4.500h3M1.500 4v5" /></Line></IconButton>
              <IconButton aria-label="Volume" $w={18} $color="#ddd"><Speaker s={14} /></IconButton>
              <TrayText $w={30}>ENG<br />US</TrayText>
              <TrayText $w={50}>4:22 PM<br />2/19/2026</TrayText>
              <IconButton aria-label="Notifications" $w={38}><Notify s={20} count="17" /></IconButton>
              <ShowDesktop aria-label="Show remote desktop" $w={4} />
            </Tray>
          </Taskbar>
        </Remote>
      </Desk>

      <Taskbar>
        {outerApps.map(([name, icon, running, current]) => (
          <Task key={name} aria-label={name} $w={49} $running={running} $current={current} $bg={current && '#464b57'}>{icon}</Task>
        ))}
        <Tray>
          <IconButton aria-label="Hidden icons" $w={24} $color="#fff"><Chevron up w={12} /></IconButton>
          <IconButton aria-label="Volume" $w={25} $color="#fff"><Speaker s={17} /></IconButton>
          <IconButton aria-label="Wi-Fi" $w={24} $color="#fff"><Wifi /></IconButton>
          <IconButton aria-label="Meet now" $w={24} $color="#fff"><CameraIcon s={16} /></IconButton>
          <TrayText $large $w={62}>4:22 PM<br />2/19/2026</TrayText>
          <IconButton aria-label="Notifications" $w={50}><Notify s={26} count="1" /></IconButton>
          <ShowDesktop aria-label="Show desktop" $w={5} />
        </Tray>
      </Taskbar>
    </Screen>
  );
}
